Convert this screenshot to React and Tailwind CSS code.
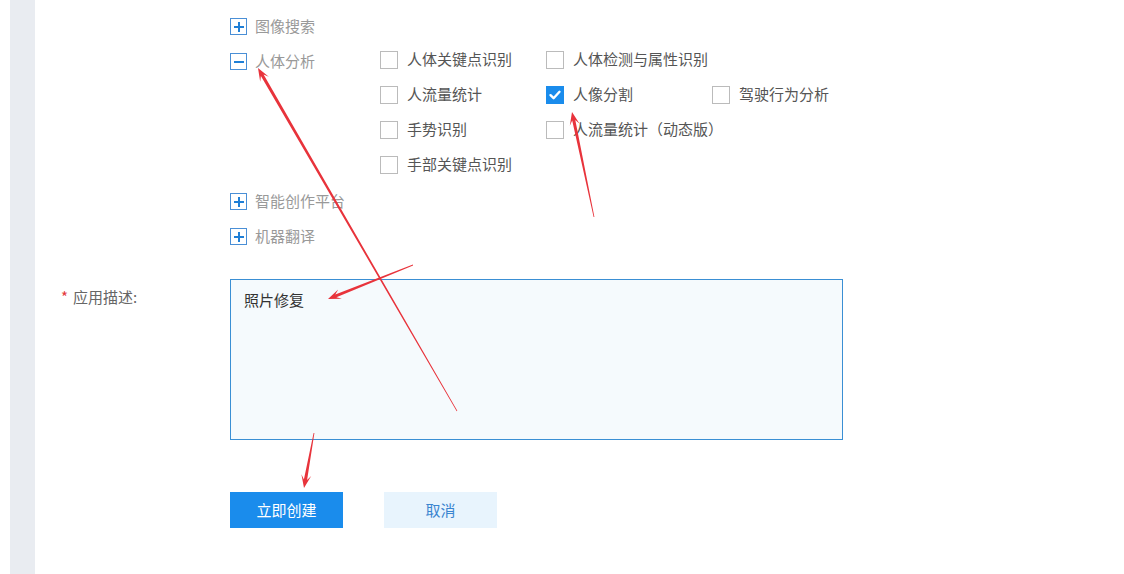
import React from "react";

const FONT = { fontFamily: '"Noto Sans CJK SC", "Microsoft YaHei", sans-serif' };

function TreeIcon({ open }) {
  return (
    <span className="relative inline-block w-[17px] h-[17px] border border-[#4a8fd6] bg-white shrink-0">
      <span className="absolute left-[2.5px] top-[6.5px] w-[10px] h-[2px] bg-[#1f7fd6]" />
      {!open && <span className="absolute left-[6.5px] top-[2.5px] w-[2px] h-[10px] bg-[#1f7fd6]" />}
    </span>
  );
}

function TreeRow({ open, label }) {
  return (
    <div className="h-[35px] flex items-center">
      <TreeIcon open={open} />
      {label && <span className="ml-[8px] text-[15px] text-[#999]">{label}</span>}
    </div>
  );
}

function Check({ label, checked }) {
  return (
    <div className="h-[35px] flex items-center">
      {checked ? (
        <span className="w-[18px] h-[18px] bg-[#1a8cec] flex items-center justify-center shrink-0">
          <svg width="14" height="14" viewBox="0 0 14 14">
            <path d="M2.5 7.2 L5.6 10.2 L11.5 3.8" fill="none" stroke="#fff" strokeWidth="2.4" strokeLinecap="round" strokeLinejoin="round" />
          </svg>
        </span>
      ) : (
        <span className="w-[18px] h-[18px] border border-[#bbb] bg-white shrink-0" />
      )}
      <span className="ml-[9px] text-[15px] text-[#555] whitespace-nowrap">{label}</span>
    </div>
  );
}

function arrowPoints(x1, y1, x2, y2) {
  const dx = x2 - x1, dy = y2 - y1;
  const L = Math.hypot(dx, dy);
  const ux = dx / L, uy = dy / L;
  const nx = -uy, ny = ux;
  const h = 13, hw = 5, w0 = 0.4, w1 = 1.6;
  const bx = x2 - ux * h * 0.65, by = y2 - uy * h * 0.65;
  const hx = x2 - ux * h, hy = y2 - uy * h;
  const pts = [
    [x1 + nx * w0, y1 + ny * w0],
    [bx + nx * w1, by + ny * w1],
    [hx + nx * hw, hy + ny * hw],
    [x2, y2],
    [hx - nx * hw, hy - ny * hw],
    [bx - nx * w1, by - ny * w1],
    [x1 - nx * w0, y1 - ny * w0],
  ];
  return pts.map((p) => p.map((v) => v.toFixed(1)).join(",")).join(" ");
}

export default function App() {
  const arrows = [
    [457, 411, 258, 68],
    [594, 217, 572, 112],
    [413, 265, 328, 299],
    [314, 433, 304, 488],
  ];
  return (
    <div className="relative w-[1124px] h-[574px] overflow-hidden bg-white flex" style={FONT}>
      <div className="w-[10px] shrink-0 bg-white" />
      <div className="w-[25px] shrink-0 bg-[#e9ecf1]" />
      <div className="flex-1 flex flex-col">
        {/* tree */}
        <div className="flex mt-[-26px]">
          <div className="w-[195px] shrink-0" />
          <div className="flex flex-col">
            <TreeRow open={false} />
            <TreeRow open={false} label="图像搜索" />
            <div className="flex">
              <div className="w-[150px] shrink-0">
                <TreeRow open={true} label="人体分析" />
              </div>
              <div className="grid grid-cols-[166px_166px_140px] relative top-[-2px]">
                <Check label="人体关键点识别" />
                <Check label="人体检测与属性识别" />
                <div />
                <Check label="人流量统计" />
                <Check label="人像分割" checked />
                <Check label="驾驶行为分析" />
                <Check label="手势识别" />
                <Check label="人流量统计（动态版）" />
                <div />
                <Check label="手部关键点识别" />
              </div>
            </div>
            <TreeRow open={false} label="智能创作平台" />
            <TreeRow open={false} label="机器翻译" />
          </div>
        </div>

        {/* description */}
        <div className="flex mt-[25px]">
          <div className="w-[195px] shrink-0 pl-[26px] pt-[7px] text-[15px] text-[#666]">
            <span className="text-[#e4393c] mr-[5px]">*</span>应用描述:
          </div>
          <div className="w-[613px] h-[161px] border border-[#3a8fd4] bg-[#f5fafd] px-[13px] pt-[9px] text-[15px] text-[#333]">
            照片修复
          </div>
        </div>

        {/* buttons */}
        <div className="flex mt-[52px]">
          <div className="w-[195px] shrink-0" />
          <button className="w-[113px] h-[36px] bg-[#1a8cec] text-white text-[15px]">立即创建</button>
          <button className="ml-[41px] w-[113px] h-[36px] bg-[#e8f4fd] text-[#3a85d0] text-[15px]">取消</button>
        </div>
      </div>

      <svg className="absolute inset-0 pointer-events-none" width="1124" height="574">
        {arrows.map((a, i) => (
          <polygon key={i} points={arrowPoints(...a)} fill="#e8333b" />
        ))}
      </svg>
    </div>
  );
}
